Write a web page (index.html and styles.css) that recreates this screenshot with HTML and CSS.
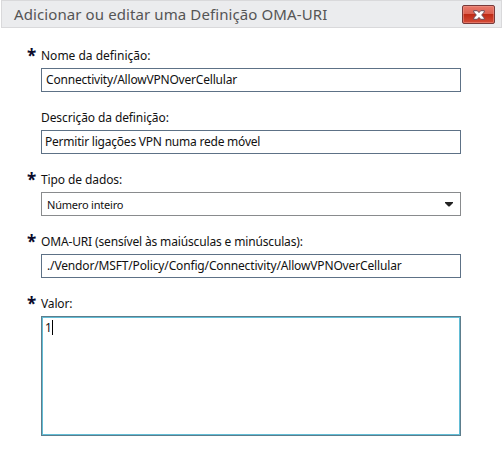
FILE: index.html
```
<!DOCTYPE html>
<html lang="pt">
<head>
<meta charset="utf-8">
<title>Definição OMA-URI</title>
<link rel="stylesheet" href="styles.css">
</head>
<body>
<div class="dialog">
  <header class="titlebar">
    <h1 class="title">Adicionar ou editar uma Definição OMA-URI</h1>
    <button class="close" aria-label="Fechar">
      <svg width="12" height="10" viewBox="0 0 12 10"><path d="M.7.7H4.3L6 2.6 7.7.7H11.3V2L8.7 5 11.3 8V9.3H7.7L6 7.4 4.3 9.3H.7V8L3.3 5 .7 2Z" fill="#fff" stroke="#6d4a55" stroke-width="1"/></svg>
    </button>
  </header>
  <main class="form">
    <section class="field">
      <div class="label-row"><span class="star">*</span><span class="label l-name">Nome da definição:</span></div>
      <div class="box"><span class="v-name">Connectivity/AllowVPNOverCellular</span></div>
    </section>
    <section class="field">
      <div class="label-row"><span class="star"></span><span class="label l-desc">Descrição da definição:</span></div>
      <div class="box"><span class="v-desc">Permitir ligações VPN numa rede móvel</span></div>
    </section>
    <section class="field">
      <div class="label-row"><span class="star">*</span><span class="label l-type">Tipo de dados:</span></div>
      <div class="box select"><span class="v-type">Número inteiro</span><svg class="arrow" width="8" height="5" viewBox="0 0 8 5"><path d="M0 0H8V1L4.5 4.5H3.5L0 1Z" fill="#222"/></svg></div>
    </section>
    <section class="field">
      <div class="label-row"><span class="star">*</span><span class="label l-uri">OMA-URI (sensível às maiúsculas e minúsculas):</span></div>
      <div class="box"><span class="v-uri">./Vendor/MSFT/Policy/Config/Connectivity/AllowVPNOverCellular</span></div>
    </section>
    <section class="field">
      <div class="label-row"><span class="star">*</span><span class="label l-value">Valor:</span></div>
      <div class="area"><span class="v-value">1</span><span class="caret"></span></div>
    </section>
  </main>
</div>
</body>
</html>
```
FILE: styles.css
```
* { box-sizing: border-box; }
body {
  margin: 0;
  background: #fff;
  font-family: "Noto Sans", "Open Sans", sans-serif;
  color: #111;
}
.dialog { width: 502px; height: 453px; padding-left: 1px; overflow: hidden; }
.titlebar {
  display: flex;
  justify-content: space-between;
  height: 28px;
  padding: 4px 6px 0 12px;
  background: #ebecee;
  border: 1px solid #d9d9db;
}
.title {
  margin: 0;
  font-size: 15px;
  line-height: 18px;
  font-weight: 400;
  letter-spacing: .1px;
  color: #555;
  white-space: nowrap;
}
.close {
  display: flex;
  align-items: center;
  justify-content: center;
  width: 33px;
  height: 19px;
  padding: 0;
  border: 1px solid #783a3a;
  border-radius: 2px;
  background: linear-gradient(#e8796b 0, #dc6252 45%, #bf2b16 50%, #d54c38 100%);
  box-shadow: inset 0 0 0 1px #ee9a8d88;
}
.form { padding: 18px 0 0 26px; }
.field { height: 62px; }
.label-row { display: flex; height: 22px; }
.star {
  width: 14px;
  font-size: 17px;
  line-height: 20px;
  font-weight: 700;
  color: #0b0b2c;
}
.label { font-size: 12px; line-height: 20px; white-space: nowrap; }
.l-desc { letter-spacing: -.1px; }
.l-type { letter-spacing: -.1px; }
.l-uri { letter-spacing: -.15px; }
.l-value { letter-spacing: -.15px; }
.box {
  display: flex;
  align-items: center;
  width: 420px;
  height: 24px;
  margin-left: 14px;
  padding: 0 7px 0 3px;
  border: 1px solid #5d7186;
  font-size: 12px;
  line-height: 22px;
  white-space: nowrap;
}
.select { justify-content: space-between; border-color: #898b8d; padding-left: 5px; }
.v-name { padding-left: 1px; letter-spacing: -.2px; }
.v-desc { letter-spacing: -.22px; }
.v-type { font-size: 11px; letter-spacing: -.2px; padding-top: 2px; }
.v-uri { padding-left: 2px; letter-spacing: -.15px; }
.area {
  display: flex;
  width: 420px;
  height: 120px;
  margin-left: 14px;
  padding: 2px 3px;
  border: 1px solid #5d7d8c;
  box-shadow: inset 0 0 0 1px #62bdd6;
  font-size: 12px;
  line-height: 18px;
}
.caret { width: 1px; height: 15px; margin-top: 1px; background: #000; }
```
